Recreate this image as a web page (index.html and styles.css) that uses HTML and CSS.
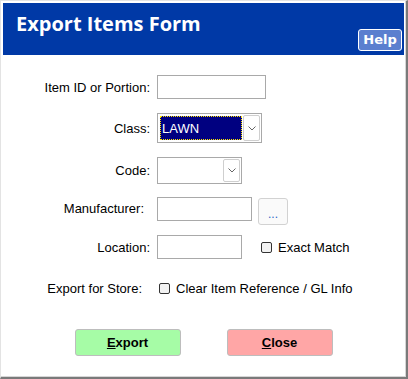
FILE: index.html
```
<!DOCTYPE html>
<html lang="en">
<head>
    <meta charset="UTF-8">
    <meta name="viewport" content="width=device-width, initial-scale=1.0">
    <title>Export Items Form</title>
    <link rel="stylesheet" href="styles.css">
</head>
<body>
    <div class="window">
        <div class="titlebar">
            <h1 class="title">Export Items Form</h1>
            <button class="help">Help</button>
        </div>
        <div class="form">
            <div class="row row-item">
                <label class="lbl">Item ID or Portion:</label>
                <input type="text" class="txt txt-item">
            </div>
            <div class="row row-class">
                <label class="lbl">Class:</label>
                <div class="select select-class">
                    <span class="select-value selected">LAWN</span>
                    <span class="select-arrow">
                        <svg width="8" height="5" viewBox="0 0 8 5"><polyline points="0.5,0.5 4,4 7.5,0.5" fill="none" stroke="#666" stroke-width="1"/></svg>
                    </span>
                </div>
            </div>
            <div class="row row-code">
                <label class="lbl">Code:</label>
                <div class="select select-code">
                    <span class="select-value"></span>
                    <span class="select-arrow">
                        <svg width="8" height="5" viewBox="0 0 8 5"><polyline points="0.5,0.5 4,4 7.5,0.5" fill="none" stroke="#666" stroke-width="1"/></svg>
                    </span>
                </div>
            </div>
            <div class="row row-mfr">
                <label class="lbl lbl-mfr">Manufacturer:</label>
                <input type="text" class="txt txt-mfr">
                <button class="lookup">...</button>
            </div>
            <div class="row row-loc">
                <label class="lbl">Location:</label>
                <input type="text" class="txt txt-loc">
                <label class="check check-exact"><input type="checkbox"> Exact Match</label>
            </div>
            <div class="row row-store">
                <label class="lbl lbl-store">Export for Store:</label>
                <label class="check check-clear"><input type="checkbox"> Clear Item Reference / GL Info</label>
            </div>
        </div>
        <div class="actions">
            <button class="btn btn-export"><u>E</u>xport</button>
            <button class="btn btn-close"><u>C</u>lose</button>
        </div>
    </div>
</body>
</html>
```
FILE: styles.css
```
body { margin: 0; font-family: "Liberation Sans", Arial, sans-serif; font-size: 13px; color: #000; }
.window { width: 408px; height: 379px; box-sizing: border-box; background: #fff; border-style: solid; border-width: 1px 2px 2px 1px; border-color: #e3e3e3 #7a7a7a #7a7a7a #e3e3e3; padding: 2px; box-shadow: inset -1px -1px 0 #d6d6d6; }

.titlebar { height: 52px; background: #0039a6; display: flex; justify-content: space-between; box-sizing: border-box; padding: 9px 2px 4px 13px; }
.title { margin: 0; font-family: "Open Sans", sans-serif; font-weight: 700; font-size: 20px; line-height: 24px; color: #fff; }
.help { align-self: flex-end; width: 44px; height: 22px; padding: 0; border: 1px solid #fff; border-radius: 3px; background: #5b7fcf; color: #fff; font-family: "DejaVu Sans", sans-serif; font-weight: 700; font-size: 13px; line-height: 18px; }

.form { display: flex; flex-direction: column; padding-top: 20px; }
.row { display: flex; align-items: center; }
.lbl { width: 147px; text-align: right; margin-right: 7px; }
.lbl-mfr { padding-right: 6px; box-sizing: border-box; }
.lbl-store { padding-right: 8px; box-sizing: border-box; }

.row-item { height: 24px; }
.row-class { height: 30px; margin-top: 14px; }
.row-code { height: 27px; margin-top: 14px; }
.row-mfr { height: 28px; margin-top: 13px; align-items: flex-start; }
.row-mfr .lbl { line-height: 24px; }
.row-loc { height: 24px; margin-top: 10px; }
.row-store { height: 20px; margin-top: 19px; }

.txt { height: 24px; box-sizing: border-box; border: 1px solid #a9a9a9; margin: 0; padding: 2px 4px; font: inherit; }
.txt-item { width: 109px; }
.txt-mfr { width: 95px; }
.txt-loc { width: 85px; }

.select { display: flex; box-sizing: border-box; border: 1px solid #a9a9a9; padding: 1px; background: #fff; }
.select-class { width: 105px; height: 30px; }
.select-code { width: 85px; height: 27px; }
.select-value { flex: 1; display: flex; align-items: center; padding-left: 2px; margin: 1px; }
.selected { background: #000080; color: #fff; outline: 1px dotted #ffe400; outline-offset: -1px; }
.select-arrow { width: 17px; box-sizing: border-box; border: 1px solid #cfcfcf; border-radius: 2px; display: flex; align-items: center; justify-content: center; background: #fff; }

.lookup { width: 30px; height: 27px; margin: 1px 0 0 6px; padding: 4px 0 0; box-sizing: border-box; border: 1px solid #d2d2d2; border-radius: 3px; background: #fafafa; color: #2f66c8; font: inherit; font-size: 12px; }

.check { display: flex; align-items: center; }
.check input { appearance: none; -webkit-appearance: none; width: 11px; height: 11px; margin: 0 6px 0 0; border: 1px solid #333; border-radius: 2px; background: #f2f2f2; }
.check-exact { margin-left: 19px; }
.check-clear { margin-left: 2px; }
.check-clear input { margin-right: 6px; }

.actions { display: flex; justify-content: center; gap: 46px; margin-top: 31px; }
.btn { width: 106px; height: 27px; box-sizing: border-box; border: 1px solid #bdbdbd; border-radius: 3px; font: inherit; font-weight: 700; font-size: 13px; color: #000; padding: 0; }
.btn-export { background: #a6fca6; }
.btn-close { background: #ffa6a6; }
```
